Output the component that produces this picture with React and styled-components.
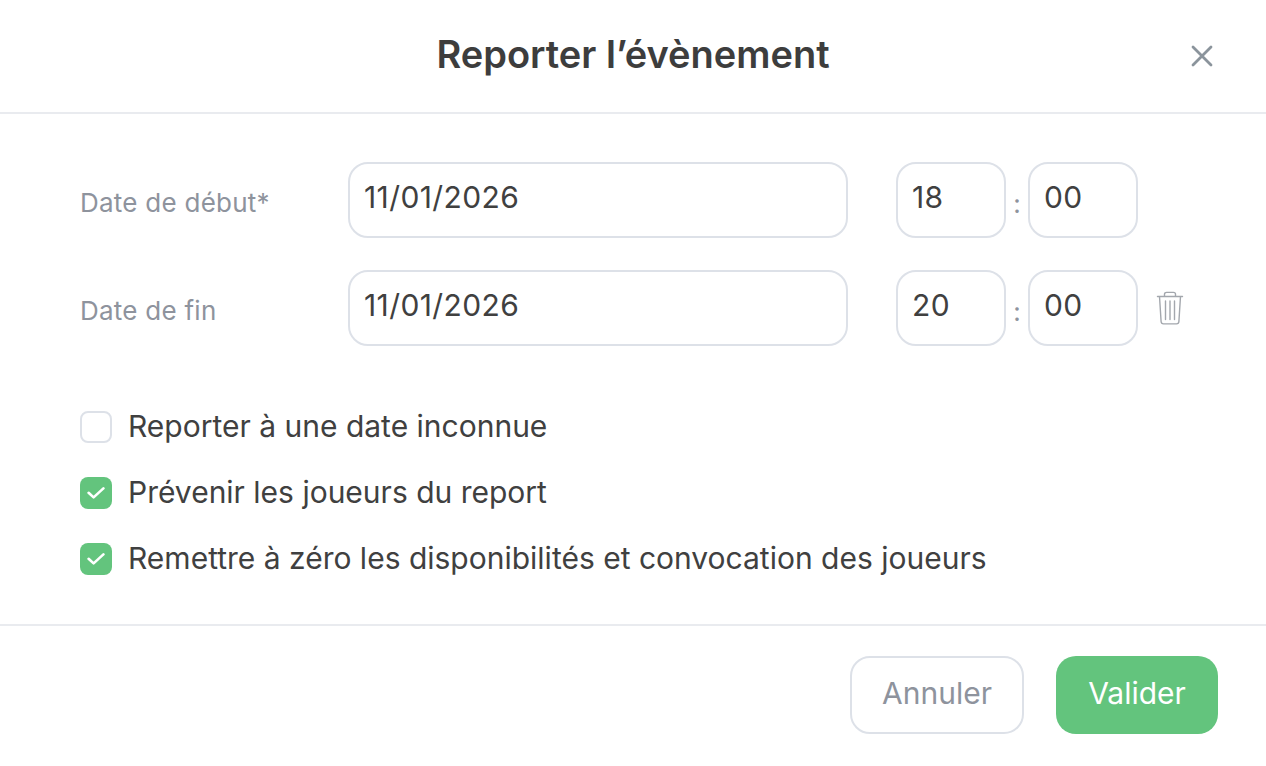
import React from 'react';
import styled, { createGlobalStyle } from 'styled-components';

const Global = createGlobalStyle`
  html, body { margin: 0; padding: 0; background: #fff; }
  body { font-family: Inter, "Liberation Sans", sans-serif; }
`;
const Modal = styled.div`
  width: 1266px; height: 766px; display: flex; flex-direction: column; background: #fff; overflow: hidden;
`;
const Header = styled.header`
  height: 112px; box-sizing: content-box; border-bottom: 2px solid #e9ebef;
  display: flex; align-items: center; justify-content: center; position: relative;
`;
const Title = styled.h1`
  margin: -4px 0 0; font-size: 38px; font-weight: 600; color: #3d3d3d; letter-spacing: 0;
`;
const Close = styled.button`
  position: absolute; left: 1190px; top: 44px; width: 24px; height: 24px; padding: 0; border: 0; background: none; display: flex;
`;
const Body = styled.div`
  height: 510px; box-sizing: border-box; padding: 48px 0 0 80px; display: flex; flex-direction: column;
`;
const Row = styled.div`
  display: flex; align-items: center; height: 76px; margin-bottom: 32px;
`;
const Label = styled.label`
  width: 268px; font-size: 26px; color: #8e939d; padding-top: 5px; letter-spacing: 0.25px;
`;
const Field = styled.div`
  box-sizing: border-box; height: 76px; width: ${p => p.$w}px; border: 2px solid #dde1e8; border-radius: 20px;
  padding: 0 14px 6px; display: flex; align-items: center; font-size: 30px; color: #404040; letter-spacing: 0.4px;
`;
const Spacer = styled.div`width: 48px;`;
const Colon = styled.span`
  width: 22px; text-align: center; font-size: 26px; color: #8e939d; padding-top: 6px;
`;
const Trash = styled.svg`
  margin-left: 18px; width: 28px; height: 34px;
`;
const Checks = styled.div`
  display: flex; flex-direction: column; gap: 34px; margin-top: 33px;
`;
const CheckRow = styled.div`
  display: flex; align-items: center; gap: 16px; height: 32px; font-size: 30px; color: #404040;
`;
const Box = styled.span`
  box-sizing: border-box; width: 32px; height: 32px; border-radius: 8px; display: flex; align-items: center; justify-content: center; flex: none;
  background: ${p => p.$on ? '#63c47d' : '#fff'};
  border: ${p => p.$on ? '0' : '2px solid #dde1e8'};
`;
const CheckText = styled.span`margin-top: -3px;`;
const Footer = styled.footer`
  border-top: 2px solid #e9ebef; flex: 1; display: flex; justify-content: flex-end; align-items: flex-start; gap: 32px; padding: 30px 48px 0 0;
`;
const Button = styled.button`
  box-sizing: border-box; height: 78px; width: ${p => p.$w}px; border-radius: 20px; font: 400 30px Inter, "Liberation Sans", sans-serif; padding: 0 0 5px;
  background: ${p => p.$primary ? '#63c47d' : '#fff'};
  color: ${p => p.$primary ? '#fff' : '#8e939d'};
  border: ${p => p.$primary ? '0' : '2px solid #dde1e8'};
`;

const Tick = () => (
  <svg width="18" height="14" viewBox="0 0 18 14" fill="none"><path d="M1.6 6.8 L6.6 11.4 L16.4 2.4" stroke="#fff" strokeWidth="2.6" strokeLinecap="round" strokeLinejoin="round" /></svg>
);
const TimeRow = ({ label, date, h, trash }) => (
  <Row>
    <Label>{label}</Label>
    <Field $w={500}>{date}</Field>
    <Spacer />
    <Field $w={110}>{h}</Field>
    <Colon>:</Colon>
    <Field $w={110}>00</Field>
    {trash && (
      <Trash viewBox="0 0 28 34" fill="none" stroke="#a3a7ad" strokeWidth="1.4" strokeLinecap="round" strokeLinejoin="round">
        <path d="M1.5 5.5h25M8.5 5.5V3.2C8.5 2 9.5 1.4 10.5 1.4h7c1 0 2 .6 2 1.8v2.3M3.5 5.5l1.6 25c.1 1.6 1 2.4 2.4 2.4h13c1.4 0 2.3-.8 2.4-2.4l1.6-25M9.5 10v18.5M14 10v18.5M18.5 10v18.5" />
      </Trash>
    )}
  </Row>
);

export default function App() {
  return (
    <Modal>
      <Global />
      <Header>
        <Title>Reporter l’évènement</Title>
        <Close aria-label="Fermer">
          <svg width="24" height="24" viewBox="0 0 24 24" fill="none"><path d="M3 3 L21 21 M21 3 L3 21" stroke="#8b949c" strokeWidth="2.8" strokeLinecap="round" /></svg>
        </Close>
      </Header>
      <Body>
        <TimeRow label="Date de début*" date="11/01/2026" h="18" />
        <TimeRow label="Date de fin" date="11/01/2026" h="20" trash />
        <Checks>
          <CheckRow><Box /><CheckText>Reporter à une date inconnue</CheckText></CheckRow>
          <CheckRow><Box $on><Tick /></Box><CheckText>Prévenir les joueurs du report</CheckText></CheckRow>
          <CheckRow><Box $on><Tick /></Box><CheckText>Remettre à zéro les disponibilités et convocation des joueurs</CheckText></CheckRow>
        </Checks>
      </Body>
      <Footer>
        <Button $w={174}>Annuler</Button>
        <Button $w={162} $primary>Valider</Button>
      </Footer>
    </Modal>
  );
}
